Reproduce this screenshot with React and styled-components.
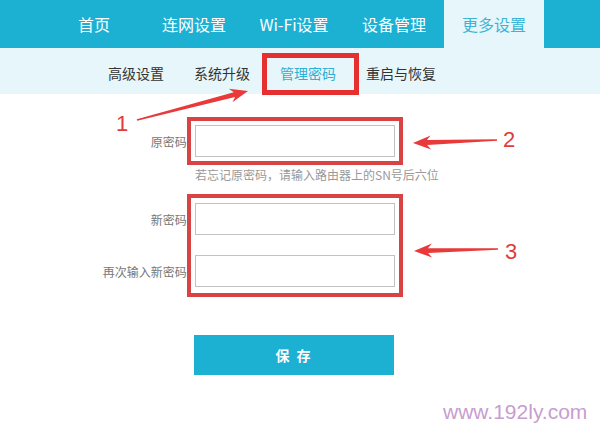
import React from 'react'
import styled, { createGlobalStyle } from 'styled-components'

const GlobalStyle = createGlobalStyle`
  html, body {
    margin: 0;
    padding: 0;
    background: #fff;
  }
  body {
    font-family: "Noto Sans CJK SC", "Noto Sans", sans-serif;
  }
`

const Page = styled.div`
  position: relative;
  width: 600px;
  height: 437px;
  overflow: hidden;
  background: #fff;
`

const TopBar = styled.nav`
  display: flex;
  height: 48px;
  padding-left: 44px;
  background: #1cb0d3;
`

const TopItem = styled.div`
  width: 100px;
  text-align: center;
  line-height: 48px;
  font-size: 16px;
  color: ${p => (p.$active ? '#3cb4d6' : '#fff')};
  background: ${p => (p.$active ? '#e6f6fb' : 'transparent')};
`

const SubBar = styled.div`
  display: flex;
  height: 46px;
  padding-left: 93px;
  background: #e6f6fb;
`

const SubItem = styled.div`
  padding: 0 15px;
  line-height: 50px;
  font-size: 14px;
  color: ${p => (p.$active ? '#2eafd4' : '#333')};
`

const Form = styled.div`
  display: flex;
  flex-direction: column;
  padding-top: 31px;
`

const Row = styled.div`
  display: flex;
  align-items: center;
  margin-top: ${p => p.$gap || 0}px;
`

const Label = styled.label`
  width: 190px;
  padding-right: 5px;
  text-align: right;
  font-size: 12px;
  color: #777;
`

const Input = styled.input`
  box-sizing: border-box;
  width: 200px;
  height: 32px;
  margin: 0;
  border: 1px solid #c2c2c2;
  background: #fff;
  outline: none;
`

const Hint = styled.div`
  margin: 10px 0 0 195px;
  line-height: 16px;
  font-size: 12px;
  color: #999;
`

const SaveButton = styled.button`
  width: 200px;
  height: 40px;
  margin: 48px 0 0 194px;
  border: 0;
  background: #1cb0d3;
  color: #fff;
  font-family: "Noto Sans CJK SC", sans-serif;
  font-size: 14px;
  font-weight: bold;
  letter-spacing: 2px;
`

const Overlay = styled.svg`
  position: absolute;
  left: 0;
  top: 0;
  pointer-events: none;
`

const Num = styled.span`
  position: absolute;
  left: ${p => p.$x}px;
  top: ${p => p.$y}px;
  font-family: "Liberation Sans", Arial, sans-serif;
  font-size: 22px;
  line-height: 22px;
  color: #e23b3b;
`

const Watermark = styled.div`
  position: absolute;
  left: 443px;
  top: 400px;
  font-family: "Liberation Sans", Arial, sans-serif;
  font-size: 21px;
  color: #c89dcf;
`

// tapered annotation arrow from tail (x1,y1) to tip (x2,y2)
function arrowPoints(x1, y1, x2, y2) {
  const dx = x2 - x1
  const dy = y2 - y1
  const len = Math.hypot(dx, dy)
  const ux = dx / len
  const uy = dy / len
  const nx = -uy
  const ny = ux
  const head = 18
  const headW = 7
  const neckW = 2.4
  const tailW = 0.8
  const bx = x2 - ux * head
  const by = y2 - uy * head
  const nkx = x2 - ux * (head - 4)
  const nky = y2 - uy * (head - 4)
  const pts = [
    [x1 + nx * tailW, y1 + ny * tailW],
    [nkx + nx * neckW, nky + ny * neckW],
    [bx + nx * headW, by + ny * headW],
    [x2, y2],
    [bx - nx * headW, by - ny * headW],
    [nkx - nx * neckW, nky - ny * neckW],
    [x1 - nx * tailW, y1 - ny * tailW],
  ]
  return pts.map(p => p.map(v => v.toFixed(1)).join(',')).join(' ')
}

const arrows = [
  [137, 120, 248, 91],
  [497, 140, 413, 143],
  [498, 249, 414, 251],
]

const boxes = [
  { x: 264.5, y: 55.5, w: 92, h: 37, sw: 5, c: '#e6302f' },
  { x: 189, y: 119, w: 212, h: 44, sw: 4, c: '#d84343' },
  { x: 189, y: 196, w: 212, h: 99, sw: 4, c: '#d84343' },
]

const topNav = ['首页', '连网设置', 'Wi-Fi设置', '设备管理', '更多设置']
const subNav = ['高级设置', '系统升级', '管理密码', '重启与恢复']

export default function App() {
  return (
    <Page>
      <GlobalStyle />
      <TopBar>
        {topNav.map(t => (
          <TopItem key={t} $active={t === '更多设置'}>{t}</TopItem>
        ))}
      </TopBar>
      <SubBar>
        {subNav.map(t => (
          <SubItem key={t} $active={t === '管理密码'}>{t}</SubItem>
        ))}
      </SubBar>

      <Form>
        <Row>
          <Label>原密码:</Label>
          <Input type="password" />
        </Row>
        <Hint>若忘记原密码，请输入路由器上的SN号后六位</Hint>
        <Row $gap={20}>
          <Label>新密码:</Label>
          <Input type="password" />
        </Row>
        <Row $gap={20}>
          <Label>再次输入新密码:</Label>
          <Input type="password" />
        </Row>
        <SaveButton>保 存</SaveButton>
      </Form>

      <Overlay width="600" height="437" viewBox="0 0 600 437">
        {boxes.map((b, i) => (
          <rect key={i} x={b.x} y={b.y} width={b.w} height={b.h} fill="none" stroke={b.c} strokeWidth={b.sw} />
        ))}
        {arrows.map((a, i) => (
          <polygon key={i} points={arrowPoints(...a)} fill="#e83a3a" />
        ))}
      </Overlay>
      <Num $x={116} $y={113}>1</Num>
      <Num $x={503} $y={129}>2</Num>
      <Num $x={505} $y={241}>3</Num>

      <Watermark>www.192ly.com</Watermark>
    </Page>
  )
}
